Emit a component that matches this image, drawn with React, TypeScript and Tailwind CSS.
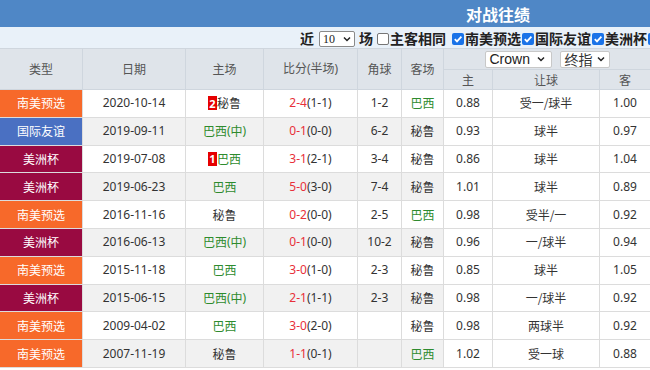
import React from "react";

type Row = {
  type: "nm" | "gj" | "mz";
  date: string;
  homeRank?: string;
  home: string;
  homeGreen: boolean;
  score: string;
  half: string;
  corner: string;
  away: string;
  awayGreen: boolean;
  h: string;
  pan: string;
  a: string;
};

const rows: Row[] = [
  { type: "nm", date: "2020-10-14", homeRank: "2", home: "秘鲁", homeGreen: false, score: "2-4", half: "(1-1)", corner: "1-2", away: "巴西", awayGreen: true, h: "0.88", pan: "受一/球半", a: "1.00" },
  { type: "gj", date: "2019-09-11", home: "巴西(中)", homeGreen: true, score: "0-1", half: "(0-0)", corner: "6-2", away: "秘鲁", awayGreen: false, h: "0.93", pan: "球半", a: "0.97" },
  { type: "mz", date: "2019-07-08", homeRank: "1", home: "巴西", homeGreen: true, score: "3-1", half: "(2-1)", corner: "3-4", away: "秘鲁", awayGreen: false, h: "0.86", pan: "球半", a: "1.04" },
  { type: "mz", date: "2019-06-23", home: "巴西", homeGreen: true, score: "5-0", half: "(3-0)", corner: "7-4", away: "秘鲁", awayGreen: false, h: "1.01", pan: "球半", a: "0.89" },
  { type: "nm", date: "2016-11-16", home: "秘鲁", homeGreen: false, score: "0-2", half: "(0-0)", corner: "2-5", away: "巴西", awayGreen: true, h: "0.98", pan: "受半/一", a: "0.92" },
  { type: "mz", date: "2016-06-13", home: "巴西(中)", homeGreen: true, score: "0-1", half: "(0-0)", corner: "10-2", away: "秘鲁", awayGreen: false, h: "0.96", pan: "一/球半", a: "0.94" },
  { type: "nm", date: "2015-11-18", home: "巴西", homeGreen: true, score: "3-0", half: "(1-0)", corner: "2-3", away: "秘鲁", awayGreen: false, h: "0.85", pan: "球半", a: "1.05" },
  { type: "mz", date: "2015-06-15", home: "巴西(中)", homeGreen: true, score: "2-1", half: "(1-1)", corner: "2-3", away: "秘鲁", awayGreen: false, h: "0.98", pan: "一/球半", a: "0.92" },
  { type: "nm", date: "2009-04-02", home: "巴西", homeGreen: true, score: "3-0", half: "(2-0)", corner: "", away: "秘鲁", awayGreen: false, h: "0.98", pan: "两球半", a: "0.92" },
  { type: "nm", date: "2007-11-19", home: "秘鲁", homeGreen: false, score: "1-1", half: "(0-1)", corner: "", away: "巴西", awayGreen: true, h: "1.02", pan: "受一球", a: "0.88" },
];

const typeInfo = {
  nm: { label: "南美预选", cls: "bg-[#f7692a]" },
  gj: { label: "国际友谊", cls: "bg-[#4a70c2]" },
  mz: { label: "美洲杯", cls: "bg-[#990a41]" },
};

function Check({ checked }: { checked: boolean }) {
  return checked ? (
    <span className="inline-flex h-[12px] w-[12px] shrink-0 items-center justify-center rounded-[2px] bg-[#1a73e8]">
      <svg width="10" height="10" viewBox="0 0 10 10">
        <path d="M1.8 5.2 L4 7.4 L8.4 2.6" stroke="white" strokeWidth="1.8" fill="none" />
      </svg>
    </span>
  ) : (
    <span className="inline-block h-[12px] w-[12px] shrink-0 rounded-[2px] border border-[#767676] bg-white" />
  );
}

function Chevron() {
  return (
    <svg width="10" height="10" viewBox="0 0 10 10" className="shrink-0">
      <path d="M2 3.5 L5 6.5 L8 3.5" stroke="#222" strokeWidth="1.5" fill="none" />
    </svg>
  );
}

const cell = "flex items-center justify-center border-r border-[#dcdcdc] h-full";
const cjk = { fontFamily: '"Noto Sans CJK SC", sans-serif' };

export default function App() {
  return (
    <div className="w-[650px] h-[370px] overflow-hidden bg-white" style={{ fontFamily: '"Noto Sans", "Noto Sans CJK SC", sans-serif' }}>
      <div className="flex h-[27px] items-center bg-[#4f87c6] pl-[466px]">
        <span className="text-[16px] font-bold text-white" style={cjk}>对战往绩</span>
      </div>
      <div className="flex h-[21px] items-center overflow-hidden whitespace-nowrap bg-[#e9f1f9] pl-[300px] pt-[2px] text-[14px] font-bold text-[#222]" style={cjk}>
        <span className="shrink-0">近</span>
        <span className="ml-[5px] mr-[4px] flex h-[16px] w-[36px] shrink-0 items-center justify-between rounded-[2px] border border-[#8a8a8a] bg-white pl-[3px] pr-[2px] text-[12px] font-normal" style={{ fontFamily: '"Liberation Serif", serif' }}>
          10<Chevron />
        </span>
        <span className="shrink-0">场</span>
        <span className="ml-[4px] mr-[1px] flex shrink-0"><Check checked={false} /></span>
        <span className="shrink-0">主客相同</span>
        <span className="ml-[6px] mr-[1px] flex shrink-0"><Check checked /></span>
        <span className="shrink-0">南美预选</span>
        <span className="ml-[1px] mr-[1px] flex shrink-0"><Check checked /></span>
        <span className="shrink-0">国际友谊</span>
        <span className="ml-[1px] mr-[1px] flex shrink-0"><Check checked /></span>
        <span className="shrink-0">美洲杯</span>
        <span className="ml-[1px] flex shrink-0"><Check checked /></span>
      </div>

      <div className="text-[12px] text-[#333]">
        <div className="flex h-[42px] border-b border-t border-[#cfd6de] bg-[#dfe4ea] text-[#555]">
          <div className="flex w-[83px] items-center justify-center border-r border-[#cfd6de]" style={cjk}>类型</div>
          <div className="flex w-[103px] items-center justify-center border-r border-[#cfd6de]" style={cjk}>日期</div>
          <div className="flex w-[78px] items-center justify-center border-r border-[#cfd6de]" style={cjk}>主场</div>
          <div className="flex w-[94px] items-center justify-center border-r border-[#cfd6de]">比分(半场)</div>
          <div className="flex w-[44px] items-center justify-center border-r border-[#cfd6de]" style={cjk}>角球</div>
          <div className="flex w-[42px] items-center justify-center border-r border-[#cfd6de]" style={cjk}>客场</div>
          <div className="flex w-[206px] flex-col">
            <div className="flex h-[21px] items-center justify-center gap-[8px] border-b border-[#cfd6de]">
              <span className="flex h-[17px] w-[67px] shrink-0 items-center justify-between rounded-[2px] border border-[#c8c8c8] bg-white pl-[4px] pr-[5px] text-[14px] text-[#222]" style={{ fontFamily: '"Liberation Sans", sans-serif' }}>
                Crown<Chevron />
              </span>
              <span className="flex h-[17px] w-[50px] shrink-0 items-center justify-between rounded-[2px] border border-[#c8c8c8] bg-white pl-[4px] pr-[3px] text-[14px] text-[#333]" style={cjk}>
                终指<Chevron />
              </span>
            </div>
            <div className="flex flex-1" style={cjk}>
              <div className="flex w-[49px] items-center justify-center border-r border-[#cfd6de]">主</div>
              <div className="flex w-[107px] items-center justify-center border-r border-[#cfd6de]">让球</div>
              <div className="flex w-[50px] items-center justify-center">客</div>
            </div>
          </div>
        </div>

        {rows.map((r, i) => {
          const gray = i % 2 === 1;
          const bg = gray ? "bg-[#f1f1f1]" : "bg-white";
          const t = typeInfo[r.type];
          return (
            <div key={i} className="flex h-[27.8px] border-b border-[#dcdcdc]">
              <div className={`flex w-[83px] items-center justify-center border-r border-[#dcdcdc] text-white ${t.cls}`} style={cjk}>
                {t.label}
              </div>
              <div className={`${cell} w-[103px] ${bg}`}>{r.date}</div>
              <div className={`${cell} w-[78px] ${bg} ${r.homeGreen ? "text-[#2e8b2e]" : "text-[#333]"}`} style={cjk}>
                {r.homeRank && (
                  <span className="inline-flex h-[14px] w-[9px] items-center justify-center bg-[#e60000] text-[11px] font-bold leading-none text-white" style={{ fontFamily: '"Noto Sans", sans-serif' }}>
                    {r.homeRank}
                  </span>
                )}
                {r.home.includes("(") ? (
                  <>
                    {r.home.slice(0, 2)}
                    <span style={{ fontFamily: '"Noto Sans", sans-serif' }}>(</span>
                    中
                    <span style={{ fontFamily: '"Noto Sans", sans-serif' }}>)</span>
                  </>
                ) : (
                  r.home
                )}
              </div>
              <div className={`${cell} w-[94px] ${bg}`}>
                <span className="text-[#e8303a]">{r.score}</span>
                <span>{r.half}</span>
              </div>
              <div className={`${cell} w-[44px] ${bg}`}>{r.corner}</div>
              <div className={`${cell} w-[42px] ${bg} ${r.awayGreen ? "text-[#2e8b2e]" : "text-[#333]"}`} style={cjk}>
                {r.away}
              </div>
              <div className={`${cell} w-[49px] bg-white`}>{r.h}</div>
              <div className={`${cell} w-[107px] bg-white`} style={cjk}>{r.pan}</div>
              <div className="flex h-full w-[50px] items-center justify-center bg-white">{r.a}</div>
            </div>
          );
        })}
      </div>
    </div>
  );
}
